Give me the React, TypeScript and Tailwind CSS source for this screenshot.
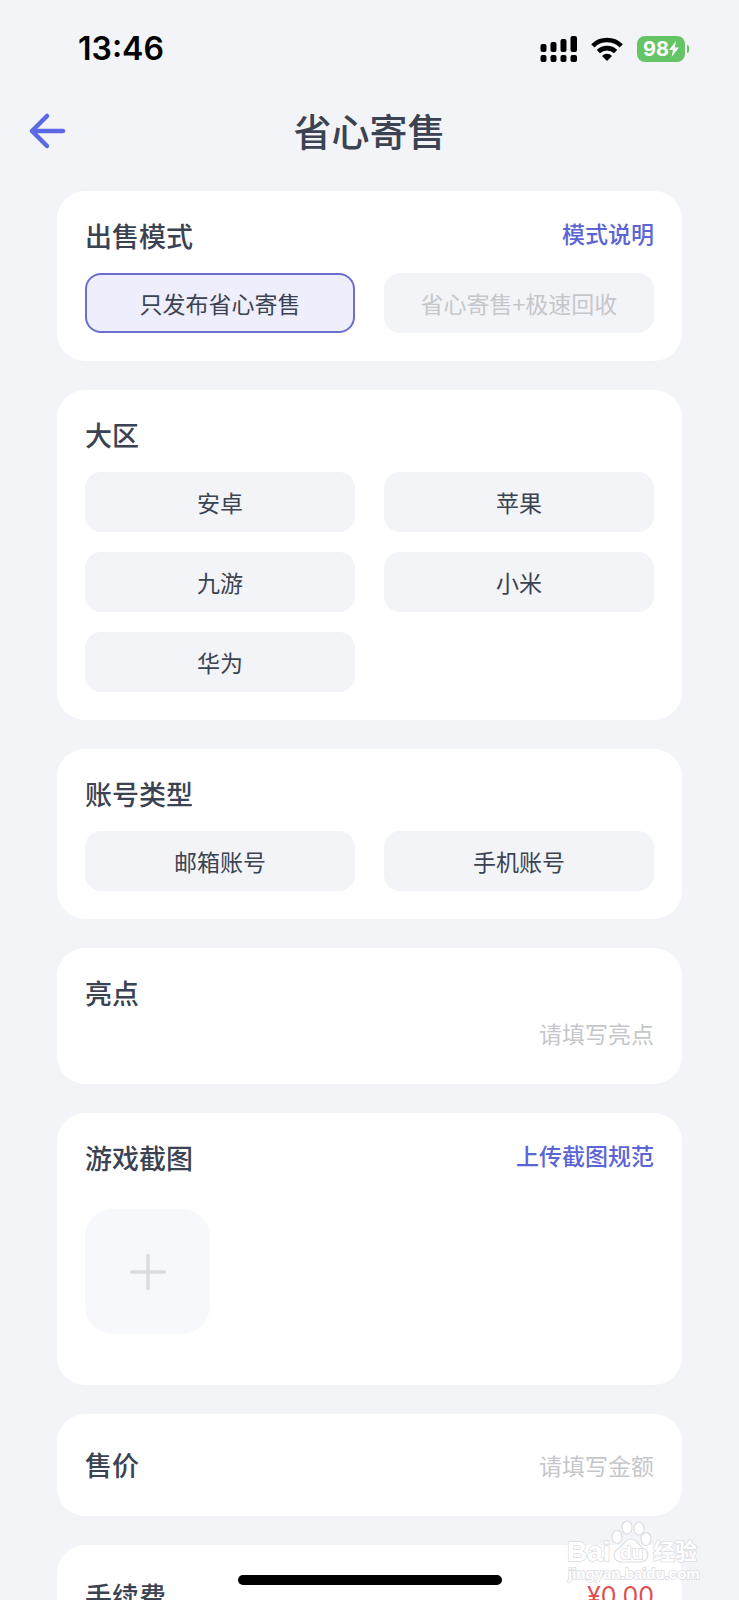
import { useState } from 'react';

const regions = ['安卓', '苹果', '九游', '小米', '华为'];
const accountTypes = ['邮箱账号', '手机账号'];

function StatusBar() {
  return (
    <div className="flex items-center justify-between pl-[78px] pr-[50px] pt-7">
      <span className="font-[Inter] text-[32px] leading-[42px] font-semibold text-black">13:46</span>
      <div className="flex items-center">
        <svg className="h-[26px] w-[37px]" viewBox="0 0 37 26" fill="#000">
          <rect x="0.500" y="8" width="6" height="8" rx="2" />
          <rect x="10.500" y="6" width="6" height="10" rx="2" />
          <rect x="20.500" y="3" width="6" height="13" rx="2" />
          <rect x="30.500" y="0" width="6.500" height="16" rx="2" />
          <rect x="0.500" y="19" width="6" height="7" rx="2" />
          <rect x="10.500" y="19" width="6" height="7" rx="2" />
          <rect x="20.500" y="19" width="6" height="7" rx="2" />
          <rect x="30.500" y="19" width="6.500" height="7" rx="2" />
        </svg>
        <svg className="ml-3.5 h-6 w-8" viewBox="0 0 32 24" fill="none" stroke="#000" strokeWidth="4.6">
          <path d="M1.8 8.8a20.4 20.4 0 0 1 28.4 0" />
          <path d="M7.4 14.6a12.4 12.4 0 0 1 17.2 0" />
          <path d="M16 24l-5-5.1a7 7 0 0 1 10 0z" fill="#000" stroke="none" />
        </svg>
        <div className="ml-3.5 flex h-[26px] w-12 items-center justify-center rounded-lg bg-[#65c466] text-white">
          <span className="font-[Inter] text-[20px] leading-6 font-bold">98</span>
          <svg className="h-4 w-2.5" viewBox="0 0 10 16" fill="#fff">
            <path d="M7 0L0 9h4L2.600 16 10 6.600H5.800z" />
          </svg>
        </div>
        <span className="ml-0.5 h-2 w-0.5 rounded-r-full bg-[#65c466]" />
      </div>
    </div>
  );
}

function Card({ children, className = 'py-7' }: { children: React.ReactNode; className?: string }) {
  return <section className={`rounded-[28px] bg-white px-7 ${className}`}>{children}</section>;
}

function CardTitle({ children }: { children: React.ReactNode }) {
  return <h2 className="text-[27px] leading-[34px] font-medium text-[#3b4352]">{children}</h2>;
}

function Option({ label, selected, disabled, onClick }: { label: string; selected?: boolean; disabled?: boolean; onClick?: () => void }) {
  return (
    <button
      type="button"
      disabled={disabled}
      aria-pressed={selected}
      onClick={onClick}
      className={`h-[60px] rounded-2xl border-2 text-[23px] leading-8 ${
        selected ? 'border-[#6a6fd0] bg-[#efeefc]' : 'border-transparent bg-[#f2f4f8]'
      } ${disabled ? 'text-[#c6c7ca]' : 'text-[#3b4352]'}`}
    >
      {label}
    </button>
  );
}

function Watermark() {
  return (
    <svg className="absolute right-[38px] bottom-3 h-[70px] w-[136px]" viewBox="0 0 136 70" aria-hidden="true">
      <g fill="#fff" stroke="#dcdde2" strokeWidth="1.200">
        <ellipse cx="52" cy="19" rx="5" ry="6.500" />
        <ellipse cx="62" cy="9.500" rx="5" ry="6.500" />
        <ellipse cx="74" cy="10.500" rx="5" ry="6.500" />
        <ellipse cx="81" cy="21" rx="5" ry="6.500" />
        <path d="M66 21c-6 0-7 6-12 9-8 5-6 14 4 14h16c10 0 12-9 4-14-5-3-6-9-12-9z" />
      </g>
      <g fill="#fff" stroke="#dcdde2" strokeWidth="1.500" paintOrder="stroke" fontWeight="700">
        <text x="2" y="43" fontSize="28" fontFamily="Liberation Sans, sans-serif">Bai</text>
        <text x="55" y="41" fontSize="19" fontFamily="Liberation Sans, sans-serif">du</text>
        <text x="88" y="41" fontSize="22" fontFamily="Noto Sans CJK SC, sans-serif">经验</text>
        <text x="3" y="61" fontSize="15" fontFamily="Liberation Sans, sans-serif">jingyan.baidu.com</text>
      </g>
    </svg>
  );
}

export default function App() {
  const [region, setRegion] = useState('');
  const [account, setAccount] = useState('');

  return (
    <div className="relative flex h-screen flex-col overflow-hidden bg-[#f2f4f8] font-['Noto_Sans_CJK_SC',sans-serif] text-[#3b4352]">
      <StatusBar />

      <header className="grid h-[121px] shrink-0 grid-cols-[1fr_auto_1fr] items-center px-7">
        <a href="#" aria-label="返回">
          <svg className="h-10 w-10" viewBox="0 0 40 40" fill="none" stroke="#5d68e4" strokeWidth="4.500" strokeLinecap="round" strokeLinejoin="round">
            <path d="M19 5L4 20l15 15M4 20h31" />
          </svg>
        </a>
        <h1 className="pb-0.5 text-[38px] leading-[52px] font-medium">省心寄售</h1>
      </header>

      <main className="flex min-h-0 flex-1 flex-col gap-[29px] overflow-y-auto px-[57px] [scrollbar-width:none] *:shrink-0">
        <Card>
          <div className="mb-5 flex h-[34px] items-start justify-between">
            <CardTitle>出售模式</CardTitle>
            <a href="#" className="text-[23px] leading-7 font-medium text-[#5c65d6]">模式说明</a>
          </div>
          <div className="grid grid-cols-2 gap-x-[29px] gap-y-5">
            <Option label="只发布省心寄售" selected />
            <Option label="省心寄售+极速回收" disabled />
          </div>
        </Card>

        <Card>
          <div className="mb-5">
            <CardTitle>大区</CardTitle>
          </div>
          <div className="grid grid-cols-2 gap-x-[29px] gap-y-5">
            {regions.map((r) => (
              <Option key={r} label={r} selected={region === r} onClick={() => setRegion(r)} />
            ))}
          </div>
        </Card>

        <Card>
          <div className="mb-5">
            <CardTitle>账号类型</CardTitle>
          </div>
          <div className="grid grid-cols-2 gap-x-[29px] gap-y-5">
            {accountTypes.map((t) => (
              <Option key={t} label={t} selected={account === t} onClick={() => setAccount(t)} />
            ))}
          </div>
        </Card>

        <Card>
          <label htmlFor="highlight">
            <CardTitle>亮点</CardTitle>
          </label>
          <input
            id="highlight"
            type="text"
            placeholder="请填写亮点"
            className="block h-[46px] w-full text-right text-[23px] leading-8 outline-none placeholder:text-[#c6c7ca]"
          />
        </Card>

        <Card className="pt-7 pb-[51px]">
          <div className="mb-[34px] flex h-[34px] items-start justify-between">
            <CardTitle>游戏截图</CardTitle>
            <a href="#" className="text-[23px] leading-7 font-medium text-[#5c65d6]">上传截图规范</a>
          </div>
          <button type="button" aria-label="添加截图" className="flex size-[125px] items-center justify-center rounded-[28px] bg-[#f7f8fb]">
            <svg className="size-9" viewBox="0 0 36 36" fill="none" stroke="#dcdcde" strokeWidth="3.500" strokeLinecap="round">
              <path d="M18 1.500v33M1.500 18h33" />
            </svg>
          </button>
        </Card>

        <Card className="flex h-[102px] items-center justify-between">
          <label htmlFor="price" className="shrink-0">
            <CardTitle>售价</CardTitle>
          </label>
          <input
            id="price"
            type="text"
            placeholder="请填写金额"
            className="min-w-0 flex-1 text-right text-[23px] leading-8 outline-none placeholder:text-[#c6c7ca]"
          />
        </Card>

        <Card className="flex h-[102px] items-center justify-between">
          <CardTitle>手续费</CardTitle>
          <span className="font-[Inter] text-[25px] leading-8 text-[#e04f4f]">¥0.00</span>
        </Card>
      </main>

      <Watermark />
      <div className="absolute bottom-[15px] left-1/2 h-2.5 w-66 -translate-x-1/2 rounded-full bg-black" />
    </div>
  );
}
